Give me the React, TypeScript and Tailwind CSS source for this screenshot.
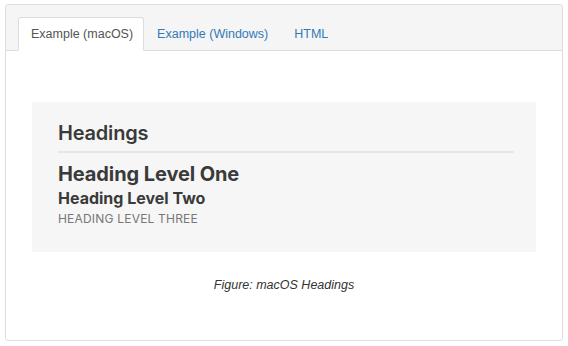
export default function App() {
  const tabs = ['Example (macOS)', 'Example (Windows)', 'HTML'];

  return (
    <div className="min-h-screen bg-white pt-[4px] pl-[5px] pr-[5px]" style={{ fontFamily: '"Liberation Sans", Arial, sans-serif' }}>
      <div className="w-[558px] h-[337px] border border-[#dddddd] rounded-[3px] overflow-hidden flex flex-col">
        {/* tab bar */}
        <div className="bg-[#f5f5f5] border-b border-[#dddddd] pt-[12px] pl-[12px] flex h-[46px] items-end">
          {tabs.map((t, i) => (
            <div
              key={t}
              className={
                i === 0
                  ? 'h-[34px] -mb-px pl-[12px] pr-[10px] flex items-center bg-white border border-[#dddddd] border-b-white rounded-t-[3px] text-[12.5px] text-[#555555]'
                  : 'h-[34px] -mb-px px-[12px] flex items-center border border-transparent text-[12.5px] text-[#337ab7]'
              }
            >
              {t}
            </div>
          ))}
        </div>

        {/* content */}
        <div className="flex-1 px-[26px] pt-[51px]">
          <div
            className="bg-[#f6f6f6] h-[150px] pl-[26px] pr-[22px] pt-[19px] text-[#3a3a3a]"
            style={{ fontFamily: 'Inter, "Noto Sans", sans-serif' }}
          >
            <div className="text-[20px] leading-[24px] font-semibold tracking-[-0.2px]">Headings</div>
            <div className="h-[2px] bg-[#e6e6e6] mt-[6px]"></div>
            <div className="text-[20px] leading-[24px] font-bold mt-[9px] tracking-[-0.1px]">Heading Level One</div>
            <div className="text-[16px] leading-[20px] font-bold mt-[2px]">Heading Level Two</div>
            <div className="text-[12px] leading-[16px] text-[#777777] mt-[3px] tracking-[0.2px]">HEADING LEVEL THREE</div>
          </div>
          <div className="text-center italic text-[12.5px] text-[#333333] mt-[24px]">Figure: macOS Headings</div>
        </div>
      </div>
    </div>
  );
}
